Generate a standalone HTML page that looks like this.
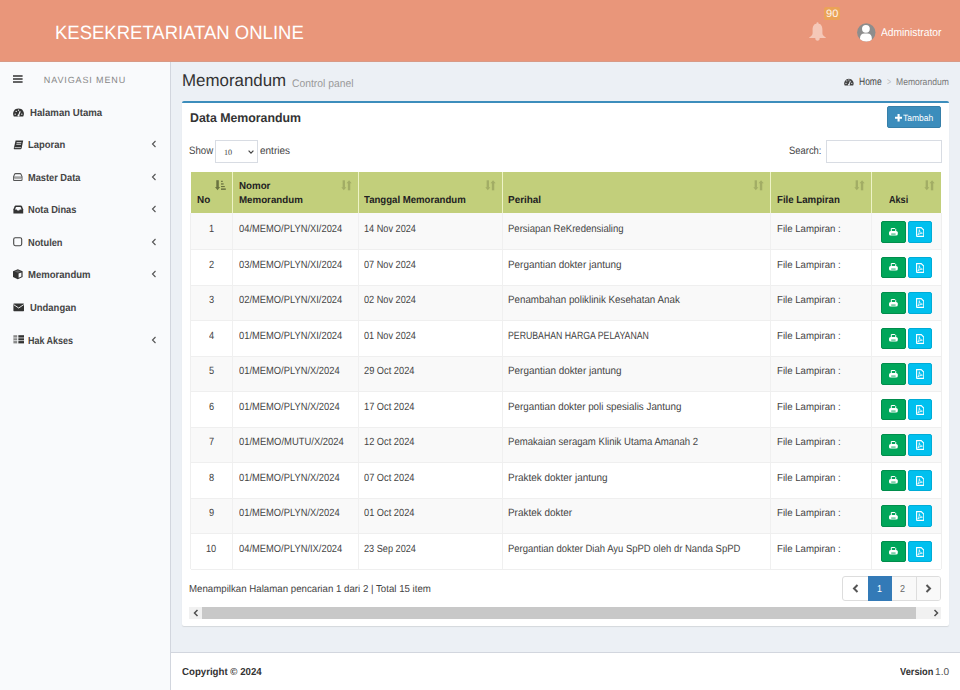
<!DOCTYPE html>
<html><head><meta charset="utf-8">
<style>
*{box-sizing:border-box;margin:0;padding:0}
html,body{width:960px;height:690px;overflow:hidden;background:#ecf0f5;font-family:"Liberation Sans",sans-serif;color:#333}
.abs{position:absolute}
.t{position:absolute;white-space:nowrap;line-height:1;transform-origin:0 0;text-rendering:geometricPrecision}
</style></head><body>
<div class="abs" style="left:0;top:0;width:960px;height:62px;background:#e9967a;border-bottom:1px solid #d89a86"></div>
<div class="t" style="left:55.33px;top:24.16px;font-size:19.19px;color:#fff;transform:scaleX(0.964);">KESEKRETARIATAN ONLINE</div>
<svg class="abs" style="left:809.4px;top:22px" width="17" height="19" viewBox="0 0 17 19"><circle cx="8.5" cy="1.3" r="1.1" fill="#f5c8b8"/><path d="M8.5 1.6 C4.8 1.6 3.6 4.5 3.6 8 V11.3 C3.6 12.9 2.2 14.2 .2 15.5 V16.1 H16.8 V15.5 C14.8 14.2 13.4 12.9 13.4 11.3 V8 C13.4 4.5 12.2 1.6 8.5 1.6 Z" fill="#f5c8b8"/><path d="M6.3 16 H10.7 A2.2 2.7 0 0 1 6.3 16 Z" fill="#f5c8b8"/></svg>
<div class="abs" style="left:824.2px;top:7.1px;width:15.6px;height:12.9px;background:#eba357;border-radius:2px"></div>
<div class="t" style="left:825.69px;top:8.72px;font-size:10.61px;color:#fdf3ea;transform:scaleX(1.047);">90</div>
<svg class="abs" style="left:856.6px;top:22.8px" width="19" height="19" viewBox="0 0 19 19"><defs><clipPath id="avc"><circle cx="9.3" cy="9.4" r="9.2"/></clipPath></defs><circle cx="9.3" cy="9.4" r="9.2" fill="#8d8d8d"/><circle cx="8.9" cy="5.8" r="3.9" fill="#fff"/><path d="M3 19 V15.2 C3 12.4 4.6 10.6 7.4 10.6 H10.4 C13.2 10.6 14.8 12.4 14.8 15.2 V19 Z" fill="#fff" clip-path="url(#avc)"/></svg>
<div class="t" style="left:881.39px;top:27.73px;font-size:11.19px;color:#fff;transform:scaleX(0.916);">Administrator</div>
<div class="abs" style="left:0;top:62px;width:171px;height:628px;background:#f9fafc;border-right:1px solid #d2d6de"></div>
<svg class="abs" style="left:13px;top:75px" width="10" height="8" viewBox="0 0 10 8"><path d="M0 1 H9.6 M0 4 H9.6 M0 7 H9.6" stroke="#333" stroke-width="1.4"/></svg>
<div class="t" style="left:43.85px;top:75.67px;font-size:9.01px;color:#888;transform:scaleX(1.000);letter-spacing:0.88px;">NAVIGASI MENU</div>
<svg class="abs" style="left:12.6px;top:108.2px" width="12" height="10" viewBox="0 0 12 10"><path d="M.77 8.4 A5.4 5.4 0 1 1 10.23 8.4 Z" fill="#333"/><path d="M5.5 7.6 L7.2 3.2" stroke="#f9fafc" stroke-width="1.1"/><circle cx="5.5" cy="7.4" r="1" fill="#f9fafc"/><circle cx="2.2" cy="6.2" r=".65" fill="#f9fafc"/><circle cx="3.2" cy="3.4" r=".65" fill="#f9fafc"/><circle cx="8.8" cy="6.2" r=".65" fill="#f9fafc"/><circle cx="5.5" cy="2.2" r=".65" fill="#f9fafc"/></svg>
<div class="t" style="left:30.02px;top:109.16px;font-size:10.32px;font-weight:bold;color:#444;transform:scaleX(0.933);">Halaman Utama</div>
<svg class="abs" style="left:12.8px;top:139.6px" width="11" height="10" viewBox="0 0 11 10"><path d="M2.6 .6 H10.2 L8.6 8.2 Q8.4 9.2 7.4 9.2 H1.4 Q.6 9.2 .8 8.2 Z" fill="#333"/><path d="M3.6 2.6 H8.3 M3.3 4.3 H8" stroke="#f9fafc" stroke-width=".8"/><path d="M1.6 7.6 H7.9" stroke="#f9fafc" stroke-width=".7"/></svg>
<div class="t" style="left:27.83px;top:140.76px;font-size:10.32px;font-weight:bold;color:#444;transform:scaleX(0.915);">Laporan</div>
<svg class="abs" style="left:151.0px;top:140.0px" width="6" height="8" viewBox="0 0 6 8"><path d="M4.5 1 L1.5 4 L4.5 7" fill="none" stroke="#555" stroke-width="1.15"/></svg>
<svg class="abs" style="left:12.7px;top:173.0px" width="11" height="9" viewBox="0 0 11 9"><path d="M2.5 .6 H7.1 Q7.7 .6 8 1.3 L9 3.6 V6.8 Q9 7.5 8.3 7.5 H1.3 Q.6 7.5 .6 6.8 V3.6 L1.6 1.3 Q1.9 .6 2.5 .6 Z" fill="none" stroke="#555" stroke-width="1.05"/><path d="M.8 4.1 H8.8" stroke="#555" stroke-width=".9"/><path d="M1.2 5.6 H8.4" stroke="#aaa" stroke-width="1.1"/></svg>
<div class="t" style="left:28.14px;top:174.36px;font-size:10.32px;font-weight:bold;color:#444;transform:scaleX(0.896);">Master Data</div>
<svg class="abs" style="left:151.0px;top:172.60000000000002px" width="6" height="8" viewBox="0 0 6 8"><path d="M4.5 1 L1.5 4 L4.5 7" fill="none" stroke="#555" stroke-width="1.15"/></svg>
<svg class="abs" style="left:12.6px;top:205px" width="11" height="9" viewBox="0 0 11 9"><path d="M2.6 .6 H8 Q8.6 .6 8.9 1.2 L10.2 4.2 V8.4 H.4 V4.2 L1.7 1.2 Q2 .6 2.6 .6 Z" fill="#333"/><path d="M2 4.4 H3.8 L4.4 5.4 H6.2 L6.8 4.4 H8.6 L7.6 1.9 H3 Z" fill="#f9fafc"/></svg>
<div class="t" style="left:28.14px;top:205.96px;font-size:10.32px;font-weight:bold;color:#444;transform:scaleX(0.897);">Nota Dinas</div>
<svg class="abs" style="left:151.0px;top:205.20000000000002px" width="6" height="8" viewBox="0 0 6 8"><path d="M4.5 1 L1.5 4 L4.5 7" fill="none" stroke="#555" stroke-width="1.15"/></svg>
<svg class="abs" style="left:12.8px;top:236.6px" width="10" height="10" viewBox="0 0 10 10"><rect x=".7" y=".7" width="8" height="8" rx="1.6" fill="none" stroke="#444" stroke-width="1.1"/></svg>
<div class="t" style="left:28.14px;top:238.56px;font-size:10.32px;font-weight:bold;color:#444;transform:scaleX(0.900);">Notulen</div>
<svg class="abs" style="left:151.0px;top:237.8px" width="6" height="8" viewBox="0 0 6 8"><path d="M4.5 1 L1.5 4 L4.5 7" fill="none" stroke="#555" stroke-width="1.15"/></svg>
<svg class="abs" style="left:13px;top:269.4px" width="11" height="11" viewBox="0 0 11 11"><path d="M4.8 .3 L9.6 2.3 V7.9 L4.8 10.2 L0 7.9 V2.3 Z" fill="#333"/><path d="M5.6 4.6 L8.4 3.4 V7.4 L5.6 8.8 Z" fill="#f9fafc"/><path d="M1.6 2.5 L4.8 1.3 L8 2.5 L4.8 3.8 Z" fill="#666"/></svg>
<div class="t" style="left:28.12px;top:271.16px;font-size:10.32px;font-weight:bold;color:#444;transform:scaleX(0.925);">Memorandum</div>
<svg class="abs" style="left:151.0px;top:270.4px" width="6" height="8" viewBox="0 0 6 8"><path d="M4.5 1 L1.5 4 L4.5 7" fill="none" stroke="#555" stroke-width="1.15"/></svg>
<svg class="abs" style="left:12.8px;top:302.8px" width="12" height="9" viewBox="0 0 12 9"><rect x=".4" y=".6" width="10.6" height="7.6" rx=".6" fill="#333"/><path d="M.6 1.6 L5.7 5 L10.8 1.6" fill="none" stroke="#f9fafc" stroke-width=".9"/></svg>
<div class="t" style="left:30.03px;top:303.76px;font-size:10.32px;font-weight:bold;color:#444;transform:scaleX(0.916);">Undangan</div>
<svg class="abs" style="left:12.8px;top:335px" width="12" height="9" viewBox="0 0 12 9"><rect x=".4" y=".2" width="4" height="8.2" fill="#888"/><rect x="5.2" y=".2" width="5.8" height="8.2" fill="#333"/><path d="M.4 2.9 H11 M.4 5.6 H11" stroke="#f9fafc" stroke-width=".7"/><path d="M4.8 0 V8.6" stroke="#f9fafc" stroke-width=".7"/></svg>
<div class="t" style="left:28.15px;top:337.36px;font-size:10.32px;font-weight:bold;color:#444;transform:scaleX(0.870);">Hak Akses</div>
<svg class="abs" style="left:151.0px;top:335.6px" width="6" height="8" viewBox="0 0 6 8"><path d="M4.5 1 L1.5 4 L4.5 7" fill="none" stroke="#555" stroke-width="1.15"/></svg>
<div class="t" style="left:182.06px;top:72.40px;font-size:17.01px;color:#333;transform:scaleX(0.993);">Memorandum</div>
<div class="t" style="left:292.48px;top:78.65px;font-size:11.05px;color:#999;transform:scaleX(0.936);">Control panel</div>
<svg class="abs" style="left:844.2px;top:78.2px" width="10" height="8" viewBox="0 0 10 8"><path d="M.67 7.6 A4.7 4.7 0 1 1 9.13 7.6 Z" fill="#444"/><path d="M4.9 6.8 L6.4 2.9" stroke="#ecf0f5" stroke-width="1"/><circle cx="4.9" cy="6.7" r=".9" fill="#ecf0f5"/><circle cx="2" cy="5.4" r=".55" fill="#ecf0f5"/><circle cx="7.8" cy="5.4" r=".55" fill="#ecf0f5"/><circle cx="2.8" cy="2.9" r=".55" fill="#ecf0f5"/><circle cx="4.9" cy="1.9" r=".55" fill="#ecf0f5"/></svg>
<div class="t" style="left:858.58px;top:76.82px;font-size:10.61px;color:#444;transform:scaleX(0.800);">Home</div>
<div class="t" style="left:886.65px;top:78.39px;font-size:10.17px;color:#bbb;transform:scaleX(0.690);">&gt;</div>
<div class="t" style="left:896.07px;top:77.62px;font-size:9.67px;color:#777;transform:scaleX(0.886);">Memorandum</div>
<div class="abs" style="left:182px;top:100.5px;width:767px;height:525.7px;background:#fff;border-top:2px solid #3c8dbc;border-radius:2px;box-shadow:0 1px 1px rgba(0,0,0,.1)"></div>
<div class="t" style="left:189.88px;top:111.60px;font-size:12.65px;font-weight:bold;color:#333;transform:scaleX(0.976);">Data Memorandum</div>
<div class="abs" style="left:887px;top:106.4px;width:54px;height:22px;background:#3c8dbc;border:1px solid #367fa9;border-radius:2px"></div>
<svg class="abs" style="left:894.9px;top:114.2px" width="7.2" height="7.5" viewBox="0 0 7.2 7.5"><path d="M3.6 0 V7.5 M0 3.75 H7.2" stroke="#fff" stroke-width="2.1"/></svg>
<div class="t" style="left:903.27px;top:113.85px;font-size:9.16px;color:#fff;transform:scaleX(0.929);">Tambah</div>
<div class="t" style="left:189.27px;top:146.46px;font-size:10.68px;color:#444;transform:scaleX(0.902);">Show</div>
<div class="abs" style="left:215px;top:140.4px;width:42.6px;height:22.4px;border:1px solid #d8dce3;background:#fff"></div>
<div class="t" style="left:223.89px;top:148.71px;font-size:8.14px;color:#444;transform:scaleX(1.007);font-family:'Liberation Serif',serif;">10</div>
<svg class="abs" style="left:247.6px;top:149.8px" width="6" height="4" viewBox="0 0 6 4"><path d="M.6 .7 L3 3.1 L5.4 .7" fill="none" stroke="#444" stroke-width="1.2"/></svg>
<div class="t" style="left:260.25px;top:146.64px;font-size:10.47px;color:#444;transform:scaleX(0.955);">entries</div>
<div class="t" style="left:789.28px;top:146.42px;font-size:10.61px;color:#444;transform:scaleX(0.887);">Search:</div>
<div class="abs" style="left:826.3px;top:140.4px;width:115.3px;height:22.4px;border:1px solid #d8dce3;background:#fff"></div>
<div class="abs" style="left:191px;top:172px;width:750px;height:41px;background:#c2cf7b"></div>
<div class="abs" style="left:232px;top:172px;width:1px;height:41px;background:#eef3c6"></div>
<div class="abs" style="left:358px;top:172px;width:1px;height:41px;background:#eef3c6"></div>
<div class="abs" style="left:502px;top:172px;width:1px;height:41px;background:#eef3c6"></div>
<div class="abs" style="left:770px;top:172px;width:1px;height:41px;background:#eef3c6"></div>
<div class="abs" style="left:871px;top:172px;width:1px;height:41px;background:#eef3c6"></div>
<div class="t" style="left:196.61px;top:195.98px;font-size:10.25px;font-weight:bold;color:#222;transform:scaleX(0.966);">No</div>
<div class="t" style="left:239.01px;top:181.69px;font-size:10.17px;font-weight:bold;color:#222;transform:scaleX(0.960);">Nomor</div>
<div class="t" style="left:238.91px;top:196.07px;font-size:9.96px;font-weight:bold;color:#222;transform:scaleX(0.978);">Memorandum</div>
<div class="t" style="left:364.22px;top:195.99px;font-size:10.17px;font-weight:bold;color:#222;transform:scaleX(0.945);">Tanggal Memorandum</div>
<div class="t" style="left:508.40px;top:196.19px;font-size:10.17px;font-weight:bold;color:#222;transform:scaleX(0.978);">Perihal</div>
<div class="t" style="left:776.62px;top:195.96px;font-size:10.32px;font-weight:bold;color:#222;transform:scaleX(0.937);">File Lampiran</div>
<div class="t" style="left:888.55px;top:195.96px;font-size:10.32px;font-weight:bold;color:#222;transform:scaleX(0.881);">Aksi</div>
<svg class="abs" style="left:214.9px;top:179.5px" width="11" height="11" viewBox="0 0 11 11"><rect x="1.3" y=".2" width="2.5" height="7.4" fill="#6a7340"/><path d="M0 7 H5.1 L2.55 10.2 Z" fill="#6a7340"/><rect x="6" y=".8" width="1.8" height="1.1" fill="#6a7340"/><rect x="6" y="3.3" width="2.6" height="1.3" fill="#6a7340"/><rect x="6" y="6.0" width="3.8" height="1.1" fill="#6a7340"/><rect x="6" y="8.4" width="4.8" height="1.5" fill="#6a7340"/></svg>
<svg class="abs" style="left:340.6px;top:179.5px" width="11" height="11" viewBox="0 0 11 11"><rect x="1.65" y=".3" width="2.3" height="7.4" fill="#a2ad65"/><path d="M.3 7.2 H5.3 L2.8 10.3 Z" fill="#a2ad65"/><rect x="6.85" y="2.8" width="2.4" height="7.5" fill="#a2ad65"/><path d="M5.5 3.3 H10.7 L8.05 .2 Z" fill="#a2ad65"/></svg>
<svg class="abs" style="left:484.5px;top:179.5px" width="11" height="11" viewBox="0 0 11 11"><rect x="1.65" y=".3" width="2.3" height="7.4" fill="#a2ad65"/><path d="M.3 7.2 H5.3 L2.8 10.3 Z" fill="#a2ad65"/><rect x="6.85" y="2.8" width="2.4" height="7.5" fill="#a2ad65"/><path d="M5.5 3.3 H10.7 L8.05 .2 Z" fill="#a2ad65"/></svg>
<svg class="abs" style="left:752.6px;top:179.5px" width="11" height="11" viewBox="0 0 11 11"><rect x="1.65" y=".3" width="2.3" height="7.4" fill="#a2ad65"/><path d="M.3 7.2 H5.3 L2.8 10.3 Z" fill="#a2ad65"/><rect x="6.85" y="2.8" width="2.4" height="7.5" fill="#a2ad65"/><path d="M5.5 3.3 H10.7 L8.05 .2 Z" fill="#a2ad65"/></svg>
<svg class="abs" style="left:854.2px;top:179.5px" width="11" height="11" viewBox="0 0 11 11"><rect x="1.65" y=".3" width="2.3" height="7.4" fill="#a2ad65"/><path d="M.3 7.2 H5.3 L2.8 10.3 Z" fill="#a2ad65"/><rect x="6.85" y="2.8" width="2.4" height="7.5" fill="#a2ad65"/><path d="M5.5 3.3 H10.7 L8.05 .2 Z" fill="#a2ad65"/></svg>
<svg class="abs" style="left:923.6px;top:179.5px" width="11" height="11" viewBox="0 0 11 11"><rect x="1.65" y=".3" width="2.3" height="7.4" fill="#a2ad65"/><path d="M.3 7.2 H5.3 L2.8 10.3 Z" fill="#a2ad65"/><rect x="6.85" y="2.8" width="2.4" height="7.5" fill="#a2ad65"/><path d="M5.5 3.3 H10.7 L8.05 .2 Z" fill="#a2ad65"/></svg>
<div class="abs" style="left:191px;top:213.00px;width:750px;height:36.80px;background:#f9f9f9"></div>
<div class="abs" style="left:232px;top:213.00px;width:1px;height:36.80px;background:#f0f0f0"></div>
<div class="abs" style="left:358px;top:213.00px;width:1px;height:36.80px;background:#f0f0f0"></div>
<div class="abs" style="left:502px;top:213.00px;width:1px;height:36.80px;background:#f0f0f0"></div>
<div class="abs" style="left:770px;top:213.00px;width:1px;height:36.80px;background:#f0f0f0"></div>
<div class="abs" style="left:871px;top:213.00px;width:1px;height:36.80px;background:#f0f0f0"></div>
<div class="t" style="left:208.58px;top:224.94px;font-size:10.47px;color:#444;transform:scaleX(0.880);">1</div>
<div class="t" style="left:238.53px;top:224.94px;font-size:10.47px;color:#444;transform:scaleX(0.893);">04/MEMO/PLYN/XI/2024</div>
<div class="t" style="left:364.24px;top:224.94px;font-size:10.47px;color:#444;transform:scaleX(0.875);">14 Nov 2024</div>
<div class="t" style="left:508.42px;top:224.94px;font-size:10.47px;color:#444;transform:scaleX(0.911);">Persiapan ReKredensialing</div>
<div class="t" style="left:776.62px;top:224.99px;font-size:10.17px;color:#444;transform:scaleX(0.949);">File Lampiran :</div>
<div class="abs" style="left:881.1px;top:221.10px;width:24.7px;height:21.7px;border-radius:2px;background:#00a65a;border:1px solid #008d4c"></div>
<div class="abs" style="left:907.8px;top:221.10px;width:24px;height:21.7px;border-radius:2px;background:#00c0ef;border:1px solid #00acd6"></div>
<svg class="abs" style="left:889px;top:227.90px" width="9" height="8" viewBox="0 0 9 8"><path d="M2.3 3.2 V.5 H5.9 L6.7 1.3 V3.2" fill="none" stroke="#fff" stroke-width="1"/><rect x="0" y="2.9" width="8.8" height="4.7" rx="1.7" fill="#fff"/><rect x="2.2" y="5.6" width="4.4" height=".9" fill="#00a65a"/></svg>
<svg class="abs" style="left:915.5px;top:227.10px" width="8.5" height="10" viewBox="0 0 8.5 10"><path d="M.6 .6 H5.2 L7.8 3.2 V8.8 Q7.8 9.4 7.2 9.4 H1.2 Q.6 9.4 .6 8.8 Z" fill="none" stroke="#fff" stroke-width="1.1"/><path d="M1.8 8 C2.8 6.6 3.4 4.8 3.3 2.4 M3.3 3.4 C3.8 5 5 6 6.4 6.2 M6.4 6.2 C4.8 6.2 3 7 1.8 8" fill="none" stroke="#fff" stroke-width=".8"/></svg>
<div class="abs" style="left:191px;top:249.80px;width:750px;height:35.50px;background:#fff"></div>
<div class="abs" style="left:191px;top:249.30px;width:750px;height:1.2px;background:#efefef"></div>
<div class="abs" style="left:232px;top:249.80px;width:1px;height:35.50px;background:#f0f0f0"></div>
<div class="abs" style="left:358px;top:249.80px;width:1px;height:35.50px;background:#f0f0f0"></div>
<div class="abs" style="left:502px;top:249.80px;width:1px;height:35.50px;background:#f0f0f0"></div>
<div class="abs" style="left:770px;top:249.80px;width:1px;height:35.50px;background:#f0f0f0"></div>
<div class="abs" style="left:871px;top:249.80px;width:1px;height:35.50px;background:#f0f0f0"></div>
<div class="t" style="left:208.58px;top:261.44px;font-size:10.47px;color:#444;transform:scaleX(0.880);">2</div>
<div class="t" style="left:238.53px;top:261.44px;font-size:10.47px;color:#444;transform:scaleX(0.893);">03/MEMO/PLYN/XI/2024</div>
<div class="t" style="left:364.24px;top:261.44px;font-size:10.47px;color:#444;transform:scaleX(0.875);">07 Nov 2024</div>
<div class="t" style="left:508.40px;top:261.44px;font-size:10.47px;color:#444;transform:scaleX(0.946);">Pergantian dokter jantung</div>
<div class="t" style="left:776.62px;top:261.49px;font-size:10.17px;color:#444;transform:scaleX(0.949);">File Lampiran :</div>
<div class="abs" style="left:881.1px;top:256.60px;width:24.7px;height:21.7px;border-radius:2px;background:#00a65a;border:1px solid #008d4c"></div>
<div class="abs" style="left:907.8px;top:256.60px;width:24px;height:21.7px;border-radius:2px;background:#00c0ef;border:1px solid #00acd6"></div>
<svg class="abs" style="left:889px;top:263.40px" width="9" height="8" viewBox="0 0 9 8"><path d="M2.3 3.2 V.5 H5.9 L6.7 1.3 V3.2" fill="none" stroke="#fff" stroke-width="1"/><rect x="0" y="2.9" width="8.8" height="4.7" rx="1.7" fill="#fff"/><rect x="2.2" y="5.6" width="4.4" height=".9" fill="#00a65a"/></svg>
<svg class="abs" style="left:915.5px;top:262.60px" width="8.5" height="10" viewBox="0 0 8.5 10"><path d="M.6 .6 H5.2 L7.8 3.2 V8.8 Q7.8 9.4 7.2 9.4 H1.2 Q.6 9.4 .6 8.8 Z" fill="none" stroke="#fff" stroke-width="1.1"/><path d="M1.8 8 C2.8 6.6 3.4 4.8 3.3 2.4 M3.3 3.4 C3.8 5 5 6 6.4 6.2 M6.4 6.2 C4.8 6.2 3 7 1.8 8" fill="none" stroke="#fff" stroke-width=".8"/></svg>
<div class="abs" style="left:191px;top:285.30px;width:750px;height:35.50px;background:#f9f9f9"></div>
<div class="abs" style="left:191px;top:284.80px;width:750px;height:1.2px;background:#efefef"></div>
<div class="abs" style="left:232px;top:285.30px;width:1px;height:35.50px;background:#f0f0f0"></div>
<div class="abs" style="left:358px;top:285.30px;width:1px;height:35.50px;background:#f0f0f0"></div>
<div class="abs" style="left:502px;top:285.30px;width:1px;height:35.50px;background:#f0f0f0"></div>
<div class="abs" style="left:770px;top:285.30px;width:1px;height:35.50px;background:#f0f0f0"></div>
<div class="abs" style="left:871px;top:285.30px;width:1px;height:35.50px;background:#f0f0f0"></div>
<div class="t" style="left:208.58px;top:295.94px;font-size:10.47px;color:#444;transform:scaleX(0.880);">3</div>
<div class="t" style="left:238.53px;top:295.94px;font-size:10.47px;color:#444;transform:scaleX(0.893);">02/MEMO/PLYN/XI/2024</div>
<div class="t" style="left:364.24px;top:295.94px;font-size:10.47px;color:#444;transform:scaleX(0.875);">02 Nov 2024</div>
<div class="t" style="left:508.41px;top:295.94px;font-size:10.47px;color:#444;transform:scaleX(0.934);">Penambahan poliklinik Kesehatan Anak</div>
<div class="t" style="left:776.62px;top:295.99px;font-size:10.17px;color:#444;transform:scaleX(0.949);">File Lampiran :</div>
<div class="abs" style="left:881.1px;top:292.10px;width:24.7px;height:21.7px;border-radius:2px;background:#00a65a;border:1px solid #008d4c"></div>
<div class="abs" style="left:907.8px;top:292.10px;width:24px;height:21.7px;border-radius:2px;background:#00c0ef;border:1px solid #00acd6"></div>
<svg class="abs" style="left:889px;top:298.90px" width="9" height="8" viewBox="0 0 9 8"><path d="M2.3 3.2 V.5 H5.9 L6.7 1.3 V3.2" fill="none" stroke="#fff" stroke-width="1"/><rect x="0" y="2.9" width="8.8" height="4.7" rx="1.7" fill="#fff"/><rect x="2.2" y="5.6" width="4.4" height=".9" fill="#00a65a"/></svg>
<svg class="abs" style="left:915.5px;top:298.10px" width="8.5" height="10" viewBox="0 0 8.5 10"><path d="M.6 .6 H5.2 L7.8 3.2 V8.8 Q7.8 9.4 7.2 9.4 H1.2 Q.6 9.4 .6 8.8 Z" fill="none" stroke="#fff" stroke-width="1.1"/><path d="M1.8 8 C2.8 6.6 3.4 4.8 3.3 2.4 M3.3 3.4 C3.8 5 5 6 6.4 6.2 M6.4 6.2 C4.8 6.2 3 7 1.8 8" fill="none" stroke="#fff" stroke-width=".8"/></svg>
<div class="abs" style="left:191px;top:320.80px;width:750px;height:35.50px;background:#fff"></div>
<div class="abs" style="left:191px;top:320.30px;width:750px;height:1.2px;background:#efefef"></div>
<div class="abs" style="left:232px;top:320.80px;width:1px;height:35.50px;background:#f0f0f0"></div>
<div class="abs" style="left:358px;top:320.80px;width:1px;height:35.50px;background:#f0f0f0"></div>
<div class="abs" style="left:502px;top:320.80px;width:1px;height:35.50px;background:#f0f0f0"></div>
<div class="abs" style="left:770px;top:320.80px;width:1px;height:35.50px;background:#f0f0f0"></div>
<div class="abs" style="left:871px;top:320.80px;width:1px;height:35.50px;background:#f0f0f0"></div>
<div class="t" style="left:208.58px;top:332.44px;font-size:10.47px;color:#444;transform:scaleX(0.880);">4</div>
<div class="t" style="left:238.53px;top:332.44px;font-size:10.47px;color:#444;transform:scaleX(0.893);">01/MEMO/PLYN/XI/2024</div>
<div class="t" style="left:364.24px;top:332.44px;font-size:10.47px;color:#444;transform:scaleX(0.875);">01 Nov 2024</div>
<div class="t" style="left:508.46px;top:332.44px;font-size:10.47px;color:#444;transform:scaleX(0.834);">PERUBAHAN HARGA PELAYANAN</div>
<div class="t" style="left:776.62px;top:332.49px;font-size:10.17px;color:#444;transform:scaleX(0.949);">File Lampiran :</div>
<div class="abs" style="left:881.1px;top:327.60px;width:24.7px;height:21.7px;border-radius:2px;background:#00a65a;border:1px solid #008d4c"></div>
<div class="abs" style="left:907.8px;top:327.60px;width:24px;height:21.7px;border-radius:2px;background:#00c0ef;border:1px solid #00acd6"></div>
<svg class="abs" style="left:889px;top:334.40px" width="9" height="8" viewBox="0 0 9 8"><path d="M2.3 3.2 V.5 H5.9 L6.7 1.3 V3.2" fill="none" stroke="#fff" stroke-width="1"/><rect x="0" y="2.9" width="8.8" height="4.7" rx="1.7" fill="#fff"/><rect x="2.2" y="5.6" width="4.4" height=".9" fill="#00a65a"/></svg>
<svg class="abs" style="left:915.5px;top:333.60px" width="8.5" height="10" viewBox="0 0 8.5 10"><path d="M.6 .6 H5.2 L7.8 3.2 V8.8 Q7.8 9.4 7.2 9.4 H1.2 Q.6 9.4 .6 8.8 Z" fill="none" stroke="#fff" stroke-width="1.1"/><path d="M1.8 8 C2.8 6.6 3.4 4.8 3.3 2.4 M3.3 3.4 C3.8 5 5 6 6.4 6.2 M6.4 6.2 C4.8 6.2 3 7 1.8 8" fill="none" stroke="#fff" stroke-width=".8"/></svg>
<div class="abs" style="left:191px;top:356.30px;width:750px;height:35.50px;background:#f9f9f9"></div>
<div class="abs" style="left:191px;top:355.80px;width:750px;height:1.2px;background:#efefef"></div>
<div class="abs" style="left:232px;top:356.30px;width:1px;height:35.50px;background:#f0f0f0"></div>
<div class="abs" style="left:358px;top:356.30px;width:1px;height:35.50px;background:#f0f0f0"></div>
<div class="abs" style="left:502px;top:356.30px;width:1px;height:35.50px;background:#f0f0f0"></div>
<div class="abs" style="left:770px;top:356.30px;width:1px;height:35.50px;background:#f0f0f0"></div>
<div class="abs" style="left:871px;top:356.30px;width:1px;height:35.50px;background:#f0f0f0"></div>
<div class="t" style="left:208.58px;top:366.94px;font-size:10.47px;color:#444;transform:scaleX(0.880);">5</div>
<div class="t" style="left:238.53px;top:366.94px;font-size:10.47px;color:#444;transform:scaleX(0.893);">01/MEMO/PLYN/X/2024</div>
<div class="t" style="left:364.24px;top:366.94px;font-size:10.47px;color:#444;transform:scaleX(0.884);">29 Oct 2024</div>
<div class="t" style="left:508.40px;top:366.94px;font-size:10.47px;color:#444;transform:scaleX(0.946);">Pergantian dokter jantung</div>
<div class="t" style="left:776.62px;top:366.99px;font-size:10.17px;color:#444;transform:scaleX(0.949);">File Lampiran :</div>
<div class="abs" style="left:881.1px;top:363.10px;width:24.7px;height:21.7px;border-radius:2px;background:#00a65a;border:1px solid #008d4c"></div>
<div class="abs" style="left:907.8px;top:363.10px;width:24px;height:21.7px;border-radius:2px;background:#00c0ef;border:1px solid #00acd6"></div>
<svg class="abs" style="left:889px;top:369.90px" width="9" height="8" viewBox="0 0 9 8"><path d="M2.3 3.2 V.5 H5.9 L6.7 1.3 V3.2" fill="none" stroke="#fff" stroke-width="1"/><rect x="0" y="2.9" width="8.8" height="4.7" rx="1.7" fill="#fff"/><rect x="2.2" y="5.6" width="4.4" height=".9" fill="#00a65a"/></svg>
<svg class="abs" style="left:915.5px;top:369.10px" width="8.5" height="10" viewBox="0 0 8.5 10"><path d="M.6 .6 H5.2 L7.8 3.2 V8.8 Q7.8 9.4 7.2 9.4 H1.2 Q.6 9.4 .6 8.8 Z" fill="none" stroke="#fff" stroke-width="1.1"/><path d="M1.8 8 C2.8 6.6 3.4 4.8 3.3 2.4 M3.3 3.4 C3.8 5 5 6 6.4 6.2 M6.4 6.2 C4.8 6.2 3 7 1.8 8" fill="none" stroke="#fff" stroke-width=".8"/></svg>
<div class="abs" style="left:191px;top:391.80px;width:750px;height:35.50px;background:#fff"></div>
<div class="abs" style="left:191px;top:391.30px;width:750px;height:1.2px;background:#efefef"></div>
<div class="abs" style="left:232px;top:391.80px;width:1px;height:35.50px;background:#f0f0f0"></div>
<div class="abs" style="left:358px;top:391.80px;width:1px;height:35.50px;background:#f0f0f0"></div>
<div class="abs" style="left:502px;top:391.80px;width:1px;height:35.50px;background:#f0f0f0"></div>
<div class="abs" style="left:770px;top:391.80px;width:1px;height:35.50px;background:#f0f0f0"></div>
<div class="abs" style="left:871px;top:391.80px;width:1px;height:35.50px;background:#f0f0f0"></div>
<div class="t" style="left:208.58px;top:403.44px;font-size:10.47px;color:#444;transform:scaleX(0.880);">6</div>
<div class="t" style="left:238.53px;top:403.44px;font-size:10.47px;color:#444;transform:scaleX(0.893);">01/MEMO/PLYN/X/2024</div>
<div class="t" style="left:364.24px;top:403.44px;font-size:10.47px;color:#444;transform:scaleX(0.884);">17 Oct 2024</div>
<div class="t" style="left:508.41px;top:403.44px;font-size:10.47px;color:#444;transform:scaleX(0.937);">Pergantian dokter poli spesialis Jantung</div>
<div class="t" style="left:776.62px;top:403.49px;font-size:10.17px;color:#444;transform:scaleX(0.949);">File Lampiran :</div>
<div class="abs" style="left:881.1px;top:398.60px;width:24.7px;height:21.7px;border-radius:2px;background:#00a65a;border:1px solid #008d4c"></div>
<div class="abs" style="left:907.8px;top:398.60px;width:24px;height:21.7px;border-radius:2px;background:#00c0ef;border:1px solid #00acd6"></div>
<svg class="abs" style="left:889px;top:405.40px" width="9" height="8" viewBox="0 0 9 8"><path d="M2.3 3.2 V.5 H5.9 L6.7 1.3 V3.2" fill="none" stroke="#fff" stroke-width="1"/><rect x="0" y="2.9" width="8.8" height="4.7" rx="1.7" fill="#fff"/><rect x="2.2" y="5.6" width="4.4" height=".9" fill="#00a65a"/></svg>
<svg class="abs" style="left:915.5px;top:404.60px" width="8.5" height="10" viewBox="0 0 8.5 10"><path d="M.6 .6 H5.2 L7.8 3.2 V8.8 Q7.8 9.4 7.2 9.4 H1.2 Q.6 9.4 .6 8.8 Z" fill="none" stroke="#fff" stroke-width="1.1"/><path d="M1.8 8 C2.8 6.6 3.4 4.8 3.3 2.4 M3.3 3.4 C3.8 5 5 6 6.4 6.2 M6.4 6.2 C4.8 6.2 3 7 1.8 8" fill="none" stroke="#fff" stroke-width=".8"/></svg>
<div class="abs" style="left:191px;top:427.30px;width:750px;height:35.50px;background:#f9f9f9"></div>
<div class="abs" style="left:191px;top:426.80px;width:750px;height:1.2px;background:#efefef"></div>
<div class="abs" style="left:232px;top:427.30px;width:1px;height:35.50px;background:#f0f0f0"></div>
<div class="abs" style="left:358px;top:427.30px;width:1px;height:35.50px;background:#f0f0f0"></div>
<div class="abs" style="left:502px;top:427.30px;width:1px;height:35.50px;background:#f0f0f0"></div>
<div class="abs" style="left:770px;top:427.30px;width:1px;height:35.50px;background:#f0f0f0"></div>
<div class="abs" style="left:871px;top:427.30px;width:1px;height:35.50px;background:#f0f0f0"></div>
<div class="t" style="left:208.58px;top:437.94px;font-size:10.47px;color:#444;transform:scaleX(0.880);">7</div>
<div class="t" style="left:238.53px;top:437.94px;font-size:10.47px;color:#444;transform:scaleX(0.901);">01/MEMO/MUTU/X/2024</div>
<div class="t" style="left:364.24px;top:437.94px;font-size:10.47px;color:#444;transform:scaleX(0.884);">12 Oct 2024</div>
<div class="t" style="left:508.42px;top:437.94px;font-size:10.47px;color:#444;transform:scaleX(0.915);">Pemakaian seragam Klinik Utama Amanah 2</div>
<div class="t" style="left:776.62px;top:437.99px;font-size:10.17px;color:#444;transform:scaleX(0.949);">File Lampiran :</div>
<div class="abs" style="left:881.1px;top:434.10px;width:24.7px;height:21.7px;border-radius:2px;background:#00a65a;border:1px solid #008d4c"></div>
<div class="abs" style="left:907.8px;top:434.10px;width:24px;height:21.7px;border-radius:2px;background:#00c0ef;border:1px solid #00acd6"></div>
<svg class="abs" style="left:889px;top:440.90px" width="9" height="8" viewBox="0 0 9 8"><path d="M2.3 3.2 V.5 H5.9 L6.7 1.3 V3.2" fill="none" stroke="#fff" stroke-width="1"/><rect x="0" y="2.9" width="8.8" height="4.7" rx="1.7" fill="#fff"/><rect x="2.2" y="5.6" width="4.4" height=".9" fill="#00a65a"/></svg>
<svg class="abs" style="left:915.5px;top:440.10px" width="8.5" height="10" viewBox="0 0 8.5 10"><path d="M.6 .6 H5.2 L7.8 3.2 V8.8 Q7.8 9.4 7.2 9.4 H1.2 Q.6 9.4 .6 8.8 Z" fill="none" stroke="#fff" stroke-width="1.1"/><path d="M1.8 8 C2.8 6.6 3.4 4.8 3.3 2.4 M3.3 3.4 C3.8 5 5 6 6.4 6.2 M6.4 6.2 C4.8 6.2 3 7 1.8 8" fill="none" stroke="#fff" stroke-width=".8"/></svg>
<div class="abs" style="left:191px;top:462.80px;width:750px;height:35.50px;background:#fff"></div>
<div class="abs" style="left:191px;top:462.30px;width:750px;height:1.2px;background:#efefef"></div>
<div class="abs" style="left:232px;top:462.80px;width:1px;height:35.50px;background:#f0f0f0"></div>
<div class="abs" style="left:358px;top:462.80px;width:1px;height:35.50px;background:#f0f0f0"></div>
<div class="abs" style="left:502px;top:462.80px;width:1px;height:35.50px;background:#f0f0f0"></div>
<div class="abs" style="left:770px;top:462.80px;width:1px;height:35.50px;background:#f0f0f0"></div>
<div class="abs" style="left:871px;top:462.80px;width:1px;height:35.50px;background:#f0f0f0"></div>
<div class="t" style="left:208.58px;top:474.44px;font-size:10.47px;color:#444;transform:scaleX(0.880);">8</div>
<div class="t" style="left:238.53px;top:474.44px;font-size:10.47px;color:#444;transform:scaleX(0.893);">01/MEMO/PLYN/X/2024</div>
<div class="t" style="left:364.24px;top:474.44px;font-size:10.47px;color:#444;transform:scaleX(0.884);">07 Oct 2024</div>
<div class="t" style="left:508.40px;top:474.44px;font-size:10.47px;color:#444;transform:scaleX(0.951);">Praktek dokter jantung</div>
<div class="t" style="left:776.62px;top:474.49px;font-size:10.17px;color:#444;transform:scaleX(0.949);">File Lampiran :</div>
<div class="abs" style="left:881.1px;top:469.60px;width:24.7px;height:21.7px;border-radius:2px;background:#00a65a;border:1px solid #008d4c"></div>
<div class="abs" style="left:907.8px;top:469.60px;width:24px;height:21.7px;border-radius:2px;background:#00c0ef;border:1px solid #00acd6"></div>
<svg class="abs" style="left:889px;top:476.40px" width="9" height="8" viewBox="0 0 9 8"><path d="M2.3 3.2 V.5 H5.9 L6.7 1.3 V3.2" fill="none" stroke="#fff" stroke-width="1"/><rect x="0" y="2.9" width="8.8" height="4.7" rx="1.7" fill="#fff"/><rect x="2.2" y="5.6" width="4.4" height=".9" fill="#00a65a"/></svg>
<svg class="abs" style="left:915.5px;top:475.60px" width="8.5" height="10" viewBox="0 0 8.5 10"><path d="M.6 .6 H5.2 L7.8 3.2 V8.8 Q7.8 9.4 7.2 9.4 H1.2 Q.6 9.4 .6 8.8 Z" fill="none" stroke="#fff" stroke-width="1.1"/><path d="M1.8 8 C2.8 6.6 3.4 4.8 3.3 2.4 M3.3 3.4 C3.8 5 5 6 6.4 6.2 M6.4 6.2 C4.8 6.2 3 7 1.8 8" fill="none" stroke="#fff" stroke-width=".8"/></svg>
<div class="abs" style="left:191px;top:498.30px;width:750px;height:35.50px;background:#f9f9f9"></div>
<div class="abs" style="left:191px;top:497.80px;width:750px;height:1.2px;background:#efefef"></div>
<div class="abs" style="left:232px;top:498.30px;width:1px;height:35.50px;background:#f0f0f0"></div>
<div class="abs" style="left:358px;top:498.30px;width:1px;height:35.50px;background:#f0f0f0"></div>
<div class="abs" style="left:502px;top:498.30px;width:1px;height:35.50px;background:#f0f0f0"></div>
<div class="abs" style="left:770px;top:498.30px;width:1px;height:35.50px;background:#f0f0f0"></div>
<div class="abs" style="left:871px;top:498.30px;width:1px;height:35.50px;background:#f0f0f0"></div>
<div class="t" style="left:208.58px;top:508.94px;font-size:10.47px;color:#444;transform:scaleX(0.880);">9</div>
<div class="t" style="left:238.53px;top:508.94px;font-size:10.47px;color:#444;transform:scaleX(0.893);">01/MEMO/PLYN/X/2024</div>
<div class="t" style="left:364.24px;top:508.94px;font-size:10.47px;color:#444;transform:scaleX(0.884);">01 Oct 2024</div>
<div class="t" style="left:508.40px;top:508.94px;font-size:10.47px;color:#444;transform:scaleX(0.948);">Praktek dokter</div>
<div class="t" style="left:776.62px;top:508.99px;font-size:10.17px;color:#444;transform:scaleX(0.949);">File Lampiran :</div>
<div class="abs" style="left:881.1px;top:505.10px;width:24.7px;height:21.7px;border-radius:2px;background:#00a65a;border:1px solid #008d4c"></div>
<div class="abs" style="left:907.8px;top:505.10px;width:24px;height:21.7px;border-radius:2px;background:#00c0ef;border:1px solid #00acd6"></div>
<svg class="abs" style="left:889px;top:511.90px" width="9" height="8" viewBox="0 0 9 8"><path d="M2.3 3.2 V.5 H5.9 L6.7 1.3 V3.2" fill="none" stroke="#fff" stroke-width="1"/><rect x="0" y="2.9" width="8.8" height="4.7" rx="1.7" fill="#fff"/><rect x="2.2" y="5.6" width="4.4" height=".9" fill="#00a65a"/></svg>
<svg class="abs" style="left:915.5px;top:511.10px" width="8.5" height="10" viewBox="0 0 8.5 10"><path d="M.6 .6 H5.2 L7.8 3.2 V8.8 Q7.8 9.4 7.2 9.4 H1.2 Q.6 9.4 .6 8.8 Z" fill="none" stroke="#fff" stroke-width="1.1"/><path d="M1.8 8 C2.8 6.6 3.4 4.8 3.3 2.4 M3.3 3.4 C3.8 5 5 6 6.4 6.2 M6.4 6.2 C4.8 6.2 3 7 1.8 8" fill="none" stroke="#fff" stroke-width=".8"/></svg>
<div class="abs" style="left:191px;top:533.80px;width:750px;height:35.50px;background:#fff"></div>
<div class="abs" style="left:191px;top:533.30px;width:750px;height:1.2px;background:#efefef"></div>
<div class="abs" style="left:232px;top:533.80px;width:1px;height:35.50px;background:#f0f0f0"></div>
<div class="abs" style="left:358px;top:533.80px;width:1px;height:35.50px;background:#f0f0f0"></div>
<div class="abs" style="left:502px;top:533.80px;width:1px;height:35.50px;background:#f0f0f0"></div>
<div class="abs" style="left:770px;top:533.80px;width:1px;height:35.50px;background:#f0f0f0"></div>
<div class="abs" style="left:871px;top:533.80px;width:1px;height:35.50px;background:#f0f0f0"></div>
<div class="t" style="left:206.02px;top:545.44px;font-size:10.47px;color:#444;transform:scaleX(0.880);">10</div>
<div class="t" style="left:238.53px;top:545.44px;font-size:10.47px;color:#444;transform:scaleX(0.893);">04/MEMO/PLYN/IX/2024</div>
<div class="t" style="left:364.24px;top:545.44px;font-size:10.47px;color:#444;transform:scaleX(0.875);">23 Sep 2024</div>
<div class="t" style="left:508.43px;top:545.44px;font-size:10.47px;color:#444;transform:scaleX(0.906);">Pergantian dokter Diah Ayu SpPD oleh dr Nanda SpPD</div>
<div class="t" style="left:776.62px;top:545.49px;font-size:10.17px;color:#444;transform:scaleX(0.949);">File Lampiran :</div>
<div class="abs" style="left:881.1px;top:540.60px;width:24.7px;height:21.7px;border-radius:2px;background:#00a65a;border:1px solid #008d4c"></div>
<div class="abs" style="left:907.8px;top:540.60px;width:24px;height:21.7px;border-radius:2px;background:#00c0ef;border:1px solid #00acd6"></div>
<svg class="abs" style="left:889px;top:547.40px" width="9" height="8" viewBox="0 0 9 8"><path d="M2.3 3.2 V.5 H5.9 L6.7 1.3 V3.2" fill="none" stroke="#fff" stroke-width="1"/><rect x="0" y="2.9" width="8.8" height="4.7" rx="1.7" fill="#fff"/><rect x="2.2" y="5.6" width="4.4" height=".9" fill="#00a65a"/></svg>
<svg class="abs" style="left:915.5px;top:546.60px" width="8.5" height="10" viewBox="0 0 8.5 10"><path d="M.6 .6 H5.2 L7.8 3.2 V8.8 Q7.8 9.4 7.2 9.4 H1.2 Q.6 9.4 .6 8.8 Z" fill="none" stroke="#fff" stroke-width="1.1"/><path d="M1.8 8 C2.8 6.6 3.4 4.8 3.3 2.4 M3.3 3.4 C3.8 5 5 6 6.4 6.2 M6.4 6.2 C4.8 6.2 3 7 1.8 8" fill="none" stroke="#fff" stroke-width=".8"/></svg>
<div class="abs" style="left:190px;top:213px;width:1px;height:356.3px;background:#efefef"></div>
<div class="abs" style="left:940.5px;top:213px;width:1px;height:356.3px;background:#efefef"></div>
<div class="abs" style="left:191px;top:568.8px;width:750px;height:1.2px;background:#efefef"></div>
<div class="t" style="left:189.32px;top:584.81px;font-size:10.03px;color:#444;transform:scaleX(0.967);">Menampilkan Halaman pencarian 1 dari 2 | Total 15 item</div>
<div class="abs" style="left:842px;top:576.2px;width:99.4px;height:24.5px;border:1px solid #ddd;border-radius:3px;background:#fff"></div>
<div class="abs" style="left:892px;top:577.2px;width:48.4px;height:22.5px;background:#f9f9f9;border-radius:0 2px 2px 0"></div>
<div class="abs" style="left:867.6px;top:576.2px;width:24.4px;height:24.5px;background:#337ab7"></div>
<div class="abs" style="left:915.5px;top:577.2px;width:1px;height:22.5px;background:#ddd"></div>
<svg class="abs" style="left:851.5px;top:584.3px" width="7" height="9" viewBox="0 0 7 9"><path d="M5.5 1 L2 4.5 L5.5 8" fill="none" stroke="#555" stroke-width="2"/></svg>
<svg class="abs" style="left:924.8px;top:584.3px" width="7" height="9" viewBox="0 0 7 9"><path d="M1.5 1 L5 4.5 L1.5 8" fill="none" stroke="#555" stroke-width="2"/></svg>
<div class="t" style="left:877.15px;top:585.11px;font-size:10.03px;color:#fff;transform:scaleX(0.900);">1</div>
<div class="t" style="left:900.35px;top:585.11px;font-size:10.03px;color:#666;transform:scaleX(0.900);">2</div>
<div class="abs" style="left:189.4px;top:606.8px;width:751.9px;height:12.0px;background:#f1f1f1"></div>
<div class="abs" style="left:202px;top:606.8px;width:713.6px;height:12.0px;background:#c8c8c8"></div>
<svg class="abs" style="left:192.6px;top:609px" width="6" height="8" viewBox="0 0 6 8"><path d="M4.5 1 L1.5 4 L4.5 7" fill="none" stroke="#505050" stroke-width="1.5"/></svg>
<svg class="abs" style="left:932.6px;top:609px" width="6" height="8" viewBox="0 0 6 8"><path d="M1.5 1 L4.5 4 L1.5 7" fill="none" stroke="#505050" stroke-width="1.5"/></svg>
<div class="abs" style="left:171px;top:652.2px;width:789px;height:38px;background:#fff;border-top:1px solid #d2d6de"></div>
<div class="t" style="left:181.72px;top:667.99px;font-size:10.17px;font-weight:bold;color:#333;transform:scaleX(0.952);">Copyright &copy; 2024</div>
<div class="t" style="left:899.54px;top:668.01px;font-size:10.03px;font-weight:bold;color:#333;transform:scaleX(0.923);">Version</div>
<div class="t" style="left:934.99px;top:668.01px;font-size:10.03px;color:#555;transform:scaleX(1.012);">1.0</div>
</body></html>
